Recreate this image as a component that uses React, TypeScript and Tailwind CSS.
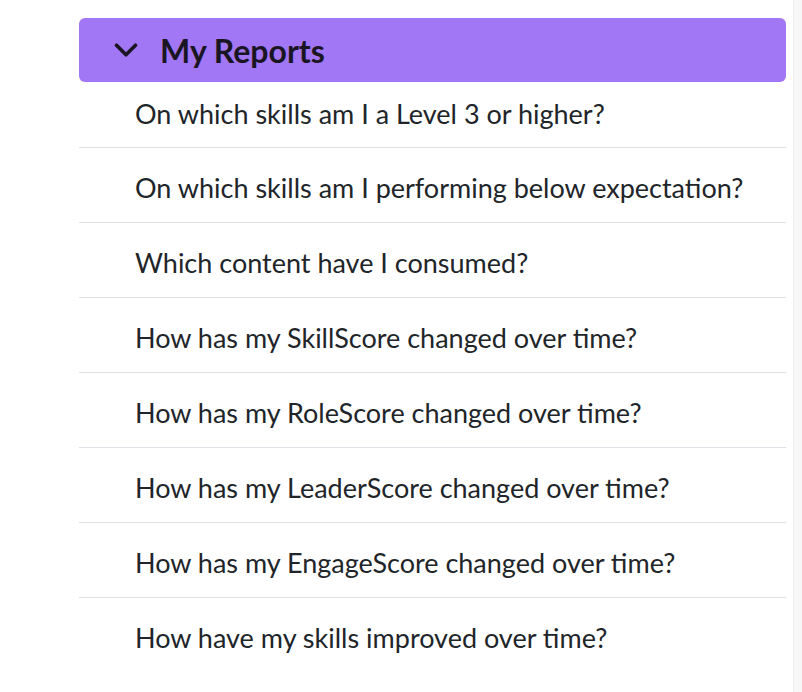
import { ChevronDown } from 'lucide-react'

const reports = [
  'On which skills am I a Level 3 or higher?',
  'On which skills am I performing below expectation?',
  'Which content have I consumed?',
  'How has my SkillScore changed over time?',
  'How has my RoleScore changed over time?',
  'How has my LeaderScore changed over time?',
  'How has my EngageScore changed over time?',
  'How have my skills improved over time?',
]

export default function App() {
  return (
    <div className="flex h-[692px] w-[802px] overflow-hidden bg-white font-['Lato','Noto_Sans',sans-serif] text-[#212529]">
      <div className="w-[79px] flex-shrink-0" />

      {/* ── Reports panel ─────────────────────────────────────────── */}
      <div className="w-[707px] flex-shrink-0 pt-[18px]">
        <div className="flex h-[64px] items-center rounded-md bg-[#a277f5] pl-[28px]">
          <ChevronDown className="h-[38px] w-[38px] text-[#1a1523]" strokeWidth={2.3} />
          <h2 className="ml-[15px] pt-[2px] text-[32px] font-bold leading-none text-[#1a1523]">My Reports</h2>
        </div>

        <ul>
          {reports.map((label, i) => (
            <li
              key={label}
              className={
                i === 0
                  ? 'flex h-[66px] items-center border-b border-[#dee2e6] pl-[56px] text-[27px]'
                  : i === reports.length - 1
                    ? 'flex h-[75px] items-center pl-[56px] pt-[6px] text-[27px]'
                    : 'flex h-[75px] items-center border-b border-[#dee2e6] pl-[56px] pt-[6px] text-[27px]'
              }
            >
              {label}
            </li>
          ))}
        </ul>
      </div>

      {/* scrollbar track */}
      <div className="ml-auto w-[9px] border-l border-[#ececec] bg-[#f7f7f7]" />
    </div>
  )
}
